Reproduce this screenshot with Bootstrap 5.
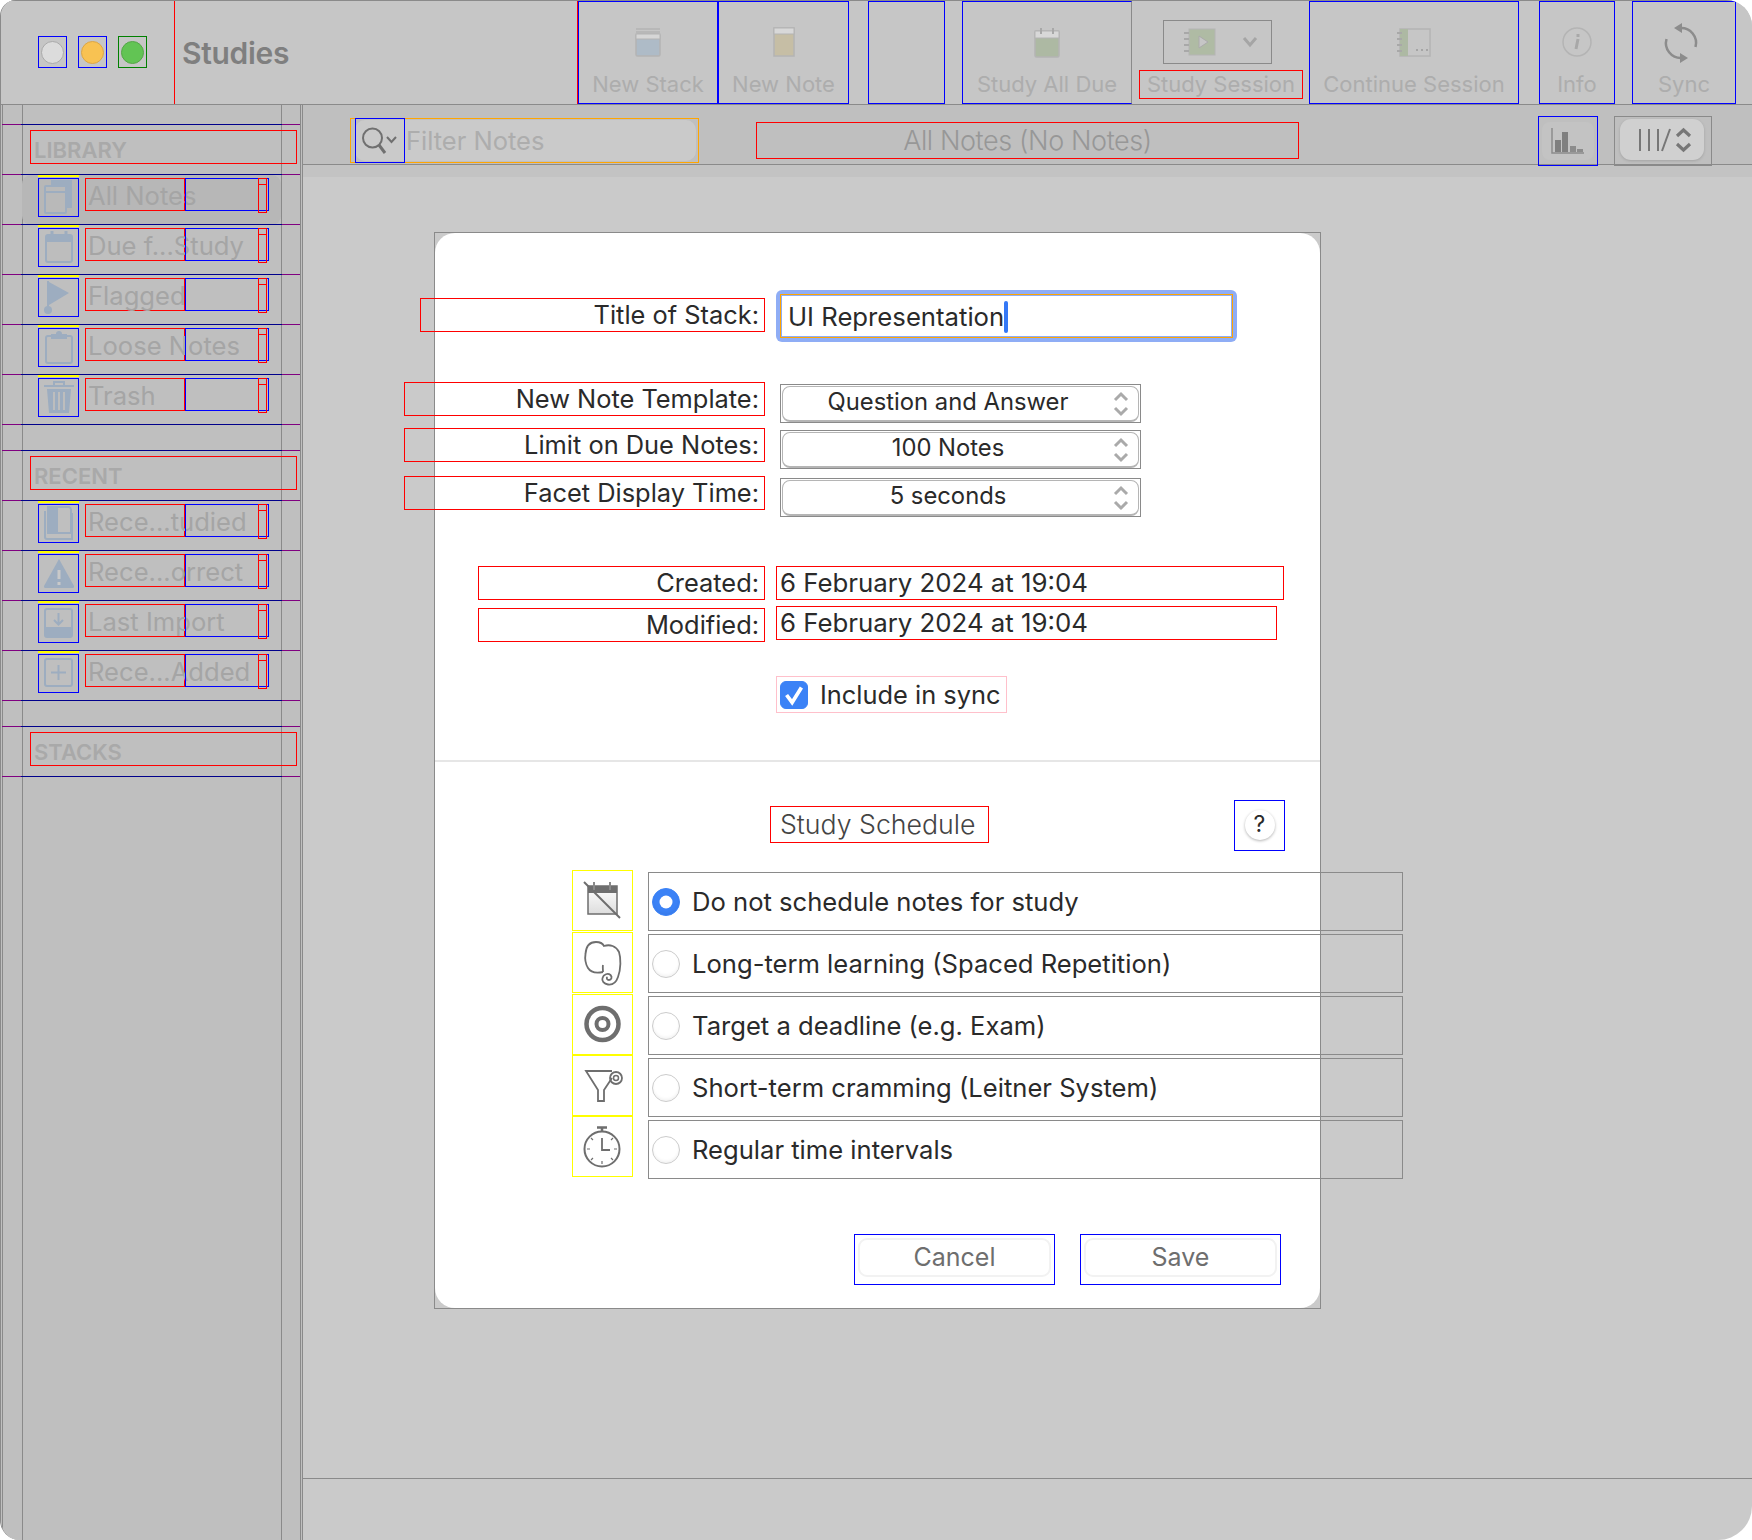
<!DOCTYPE html>
<html lang="en">
<head>
  <meta charset="UTF-8" />
  <title>Studies</title>
  <link href="https://cdn.jsdelivr.net/npm/bootstrap@5.3.3/dist/css/bootstrap.min.css" rel="stylesheet" />
  <style>
    body { background: #fff; margin: 0; font-family: Inter, "Liberation Sans", sans-serif; color: #2a2a2a; overflow: hidden; }
    .app-window { width: 1752px; height: 1540px; background: #cacaca; border-radius: 16px 26px 34px 20px; overflow: hidden; border-left: 1px solid #8a8a8a; }

    /* top toolbar */
    .top-bar { height: 105px; background: #c6c6c6; border-top: 1px solid #8a8a8a; border-bottom: 1px solid #8a8a8a; }
    .light-box { width: 29px; height: 32px; margin-top: 35px; border: 1px solid #00f; }
    .light-dot { width: 23px; height: 23px; border-radius: 50%; border: 1px solid #aaa; }
    .dot-grey { background: #dcdcdc; }
    .dot-amber { background: #f8c252; border-color: #dca645; }
    .dot-green { background: #62c454; border-color: #55a548; }
    .app-title { width: 404px; height: 103px; margin-left: 27px; padding: 1px 0 0 7px; border: 1px solid #f00; border-top: 0; border-bottom: 0; font-size: 30px; font-weight: 600; color: #7f7f7f; letter-spacing: -.3px; }
    .tool-item { height: 103px; border: 1px solid #00f; padding-top: 24px; color: #adadad; font-size: 22px; line-height: 28px; white-space: nowrap; }
    .tool-item svg { display: block; height: 32px; margin-bottom: 12px; }
    .tool-item .sync-icon { height: 42px; margin: -4px 6px 6px 0; }
    .session-drop { width: 109px; height: 44px; margin: 19px 0 6px 31px; border: 1px solid #8a8a8a; }
    .session-play { margin-left: 19px; }
    .session-arrow { margin-left: 25px; }
    .session-label { width: 164px; height: 29px; margin-left: 7px; border: 1px solid #f00; color: #adadad; font-size: 22px; line-height: 27px; }

    /* second bar */
    .sub-bar { height: 60px; background: #bfbfbf; border-bottom: 1px solid #8a8a8a; }
    .filter-wrap { width: 349px; height: 45px; margin: 13px 0 0 47px; border: 1px solid #ffa500; padding: 0 2px 0 4px; }
    .filter-field { height: 41px; margin-top: 1px; background: #cacaca; border-radius: 10px; }
    .filter-btn { width: 50px; height: 45px; border: 1px solid #00f; flex: none; }
    .filter-text { font-size: 25.500px; color: #adadad; margin: 2px 0 0 1px; }
    .list-title { width: 543px; height: 37px; margin: 17px 0 0 57px; border: 1px solid #f00; font-size: 27px; font-weight: 300; letter-spacing: -.4px; color: #979797; line-height: 36px; text-align: center; }
    .chart-btn { width: 60px; height: 50px; margin: 11px 0 0 239px; border: 1px solid #00f; }
    .chart-inner { width: 52px; height: 38px; background: #c3c3c3; border-radius: 8px; }
    .view-box { width: 98px; height: 50px; margin: 11px 0 0 16px; border: 1px solid #8a8a8a; padding: 2px 0 0 5px; }
    .view-pill { width: 84px; height: 41px; padding-left: 5px; background: #d0d0d0; border-radius: 11px; box-shadow: 0 1px 3px rgba(0,0,0,.15); }
    .strip { height: 12px; background: #c3c3c3; }

    /* sidebar */
    .side-pane { width: 302px; height: 1435px; padding: 19px 0 0 1px; background-color: #bfbfbf; flex: none;
      background-image:
        linear-gradient(#8a8a8a, #8a8a8a), linear-gradient(#8a8a8a, #8a8a8a),
        linear-gradient(#8a8a8a, #8a8a8a), linear-gradient(#8a8a8a, #8a8a8a);
      background-size: 1px 100%; background-repeat: no-repeat;
      background-position: 1px 0, 21px 0, 280px 0, 299px 0;
      border-right: 1px solid #8a8a8a; }
    .side-group { margin-bottom: 25px; width: 298px; border-bottom: 1px solid; border-image: linear-gradient(to right, #800080 20px, #00008b 20px, #00008b 279px, #800080 279px) 1; }
    .side-row { height: 50px; position: relative; border-top: 1px solid; border-image: linear-gradient(to right, #800080 20px, #00008b 20px, #00008b 279px, #800080 279px) 1; }
    .side-head { width: 267px; height: 34px; margin: 5px 0 0 28px; padding-left: 3px; border: 1px solid #f00; font-size: 22px; font-weight: 600; color: #a9a9a9; line-height: 39px; overflow: hidden; }
    .side-pick { position: absolute; left: 20px; top: 0; width: 259px; height: 50px; background: #b7b7b7; border-radius: 9px; }
    .side-icon { position: relative; width: 41px; height: 39px; margin: 3px 0 0 36px; border: 1px solid #00f; flex: none; }
    .side-icon::before { content: ""; position: absolute; left: -1px; right: -1px; top: -4px; border-top: 2px solid #ff0; }
    .side-icon svg { display: block; width: 39px; height: 37px; }
    .side-label { position: relative; width: 100px; height: 33px; margin: 3px 0 0 6px; padding-left: 2px; border: 1px solid #f00; font-size: 25.600px; line-height: 33px; color: #a5a5a5; white-space: nowrap; flex: none; }
    .side-count { position: relative; width: 84px; height: 33px; margin-top: 3px; border: 1px solid #00f; flex: none; }
    .side-mark { position: absolute; right: 1px; top: -1px; width: 9px; height: 35px; border: 1px solid #f00; }
    .side-mark::after { content: ""; position: absolute; left: 0; right: 0; top: 5px; border-top: 1px solid #f00; }

    /* stack sheet */
    .main-pane { width: 1449px; position: relative; }
    .main-foot { position: absolute; left: 0; right: 0; top: 1373px; border-top: 1px solid #8a8a8a; }
    .sheet-outer { width: 887px; height: 1077px; margin: 55px 0 0 131px; border: 1px solid #8a8a8a; }
    .sheet-body { height: 100%; background: #fff; border-radius: 20px; padding-top: 57px; font-size: 25.600px; }
    .lbl-box { height: 34px; padding-right: 5px; border: 1px solid #f00; text-align: right; line-height: 32px; flex: none; font-size: 25.400px; }
    .lbl-wide { width: 345px; margin-left: -15px; }
    .lbl-long { width: 361px; margin-left: -31px; }
    .lbl-date { width: 287px; margin-left: 43px; }
    .title-ring { width: 461px; height: 52px; margin-left: 11px; padding: 4px; background: #8fadf5; border-radius: 6px; flex: none; }
    .title-input.form-control { height: 44px; padding: 0 7px; border: 1px solid #ffa500; border-radius: 0; font-size: 25.700px; color: #2a2a2a; line-height: 44px; box-shadow: inset 0 0 0 1px #8fadf5; }
    .text-caret { display: inline-block; width: 4px; height: 32px; background: #3478f6; border-radius: 2px; vertical-align: middle; margin-top: -3px; }
    .select-box { width: 361px; height: 39px; margin: 2px 0 0 15px; border: 1px solid #8a8a8a; padding: 1px; flex: none; }
    .select-box .form-select { height: 36px; padding: 0 25px 4px 0; border: 1px solid #b5b5b5; border-bottom-width: 2px; border-radius: 8px; box-shadow: none; color: #2a2a2a; font-size: 23.800px; line-height: 30px; text-align: center; text-align-last: center; background-size: 16px 26px; background-position: right 9px center;
      background-image: url("data:image/svg+xml,%3Csvg xmlns='http://www.w3.org/2000/svg' viewBox='0 0 16 26'%3E%3Cpath d='M2 9l6-6 6 6M2 17l6 6 6-6' fill='none' stroke='%23aaa' stroke-width='3'/%3E%3C/svg%3E"); }
    .date-box { height: 34px; margin-left: 11px; padding-left: 3px; border: 1px solid #f00; font-size: 25.800px; line-height: 32px; flex: none; }
    .sync-box { width: 231px; height: 37px; margin: 34px 0 0 341px; padding-left: 3px; border: 1px solid #ffc0cb; }
    .sync-box label { margin-top: 2px; font-size: 25.400px; }
    .sync-box .form-check-input { width: 28px; height: 28px; margin: 0 12px 0 0; background-color: #3b82f6; border-color: #3b82f6; border-radius: 6px; flex: none; background-size: 100% 100%;
      background-image: url("data:image/svg+xml,%3Csvg xmlns='http://www.w3.org/2000/svg' viewBox='0 0 28 28'%3E%3Cpath d='M6 14l6 8L22 6' fill='none' stroke='%23fff' stroke-width='4'/%3E%3C/svg%3E"); }
    .sheet-rule { height: 2px; background: #e6e6e6; margin-top: 47px; }
    .schedule-title { width: 219px; height: 37px; margin: 44px 0 0 335px; padding-left: 9px; border: 1px solid #f00; font-weight: 300; color: #444; font-size: 26.700px; line-height: 35px; white-space: nowrap; flex: none; }
    .help-box { width: 51px; height: 51px; margin: 38px 0 0 245px; border: 1px solid #00f; flex: none; }
    .help-btn { width: 30px; height: 30px; margin-top: -2px; border-radius: 50%; background: #fff; box-shadow: 0 1px 3px rgba(0,0,0,.3); font-size: 23px; line-height: 1; }
    .schedule-wrap { margin: 19px 0 0 137px; }
    .ico-col { width: 61px; margin-right: 15px; flex: none; }
    .ico-box { width: 61px; height: 61px; border: 1px solid #ff0; margin-top: 1px; }
    .ico-box:first-child, .ico-box.ico-tight { margin-top: 0; }
    .ico-box svg { width: 44px; height: 44px; overflow: visible; }
    .plan-col { width: 755px; margin-top: 2px; flex: none; }
    .plan-row { height: 59px; margin-bottom: 3px; padding-left: 3px; border: 1px solid #8a8a8a; }
    .plan-row label { margin-top: 2px; }
    .plan-row .form-check-input { width: 28px; height: 28px; margin: 0 12px 0 0; border-color: #ccc; box-shadow: inset 0 -2px 3px rgba(0,0,0,.05); flex: none; }
    .plan-row .form-check-input:checked { background-color: #3b82f6; border-color: #3b82f6; }
    .foot-btns { margin: 52px 39px 0 0; gap: 25px; }
    .foot-box { width: 201px; height: 51px; border: 1px solid #00f; padding: 3px; }
    .foot-box .btn { display: block; width: 100%; height: 39px; padding: 0; border: 2px solid #f2f2f2; border-radius: 9px; background: #fff; color: #6e6e6e; font-size: 25px; line-height: 29px; }
  </style>
</head>
<body>
  <div class="app-window">
    <div class="top-bar d-flex">
      <div class="light-box d-flex align-items-center justify-content-center" style="margin-left:37px"><div class="light-dot dot-grey"></div></div>
      <div class="light-box d-flex align-items-center justify-content-center" style="margin-left:11px"><div class="light-dot dot-amber"></div></div>
      <div class="light-box d-flex align-items-center justify-content-center" style="margin-left:11px;border-color:#008000"><div class="light-dot dot-green"></div></div>
      <div class="app-title d-flex align-items-center">Studies</div>

      <div class="tool-item d-flex flex-column align-items-center" style="width:140px">
        <svg width="28" viewBox="0 0 28 32"><path d="M2 3h24M2 6h24" stroke="#b4b4b4" stroke-width="1.5"/><rect x="2" y="8" width="24" height="22" rx="1.5" fill="#aebbc7" stroke="#b4b4b4" stroke-width="1.5"/><rect x="2" y="8" width="24" height="5" fill="#d6d6d6" stroke="#b4b4b4"/></svg>
        New Stack
      </div>
      <div class="tool-item d-flex flex-column align-items-center" style="width:131px">
        <svg width="24" viewBox="0 0 24 32"><rect x="2" y="2" width="20" height="28" fill="#c6bea5" stroke="#b4b4b4" stroke-width="1.5"/><rect x="2" y="2" width="20" height="6" fill="#d8d8d8" stroke="#b4b4b4"/></svg>
        New Note
      </div>
      <div class="tool-item" style="width:77px;margin-left:19px"></div>
      <div class="tool-item d-flex flex-column align-items-center" style="width:170px;margin-left:17px;border-right-color:#8a8a8a">
        <svg width="28" viewBox="0 0 28 32"><rect x="2" y="5" width="24" height="26" rx="1.5" fill="#adb9a3" stroke="#b4b4b4" stroke-width="1.5"/><rect x="2" y="5" width="24" height="7" fill="#d8d8d8" stroke="#b4b4b4"/><path d="M8 2v6M20 2v6" stroke="#a8a8a8" stroke-width="2"/></svg>
        Study All Due
      </div>
      <div style="width:177px">
        <div class="session-drop d-flex align-items-center">
          <svg class="session-play" width="34" height="28" viewBox="0 0 34 28"><rect x="6" y="1" width="26" height="26" fill="#afbba4" stroke="#b4b4b4"/><path d="M1 5h5M1 11h5M1 17h5M1 23h5" stroke="#a8a8a8" stroke-width="2"/><path d="M16 8l9 6-9 6z" fill="#c6c6c6" stroke="#aaa"/></svg>
          <svg class="session-arrow" width="16" height="12" viewBox="0 0 16 12"><path d="M2 2l6 7 6-7" fill="none" stroke="#a5a5a5" stroke-width="3"/></svg>
        </div>
        <div class="session-label text-center">Study Session</div>
      </div>
      <div class="tool-item d-flex flex-column align-items-center" style="width:210px">
        <svg width="36" viewBox="0 0 36 32"><rect x="4" y="3" width="30" height="27" fill="#c6c6c6" stroke="#b4b4b4" stroke-width="1.5"/><rect x="4" y="3" width="8" height="27" fill="#adb9a3"/><path d="M1 7h5M1 13h5M1 19h5M1 25h5" stroke="#a8a8a8" stroke-width="2"/><path d="M20 24h2M25 24h2M30 24h2" stroke="#a5a5a5" stroke-width="2"/></svg>
        Continue Session
      </div>
      <div class="tool-item d-flex flex-column align-items-center" style="width:76px;margin-left:20px">
        <svg width="32" viewBox="0 0 32 32"><circle cx="16" cy="16" r="14" fill="none" stroke="#b4b4b4" stroke-width="1.5"/><path d="M17 8v3M17 13l-2 10" stroke="#a8a8a8" stroke-width="3"/></svg>
        Info
      </div>
      <div class="tool-item d-flex flex-column align-items-center" style="width:104px;margin-left:17px">
        <svg class="sync-icon" width="36" viewBox="0 0 36 42"><path d="M17 6A15 15 0 0 1 32.500 25M19 36A15 15 0 0 1 3.500 17" fill="none" stroke="#8c8c8c" stroke-width="2.500"/><path d="M11 6l8-5v10zM25 36l-8 5V31z" fill="#8c8c8c"/></svg>
        Sync
      </div>
    </div>

    <div class="d-flex">
      <div class="side-pane">
        <div class="side-group">
          <div class="side-row"><div class="side-head">LIBRARY</div></div>
          <div class="side-row d-flex"><div class="side-pick"></div>
            <div class="side-icon"><svg viewBox="0 0 39 37"><rect x="12" y="1" width="21" height="28" fill="#9dadc0"/><rect x="6" y="7" width="21" height="27" rx="1" fill="#b9b9b9" stroke="#9dadc0" stroke-width="2"/><path d="M6 13h21" stroke="#9dadc0" stroke-width="2"/></svg></div>
            <div class="side-label">All Notes</div><div class="side-count"><div class="side-mark"></div></div></div>
          <div class="side-row d-flex">
            <div class="side-icon"><svg viewBox="0 0 39 37"><rect x="7" y="6" width="26" height="27" rx="2" fill="#bdbdbd" stroke="#9dadc0" stroke-width="2"/><path d="M7 6h26v7H7z" fill="#9dadc0"/><path d="M13 2v6M27 2v6" stroke="#9dadc0" stroke-width="3"/></svg></div>
            <div class="side-label">Due f...Study</div><div class="side-count"><div class="side-mark"></div></div></div>
          <div class="side-row d-flex">
            <div class="side-icon"><svg viewBox="0 0 39 37"><path d="M9 2v28" stroke="#9dadc0" stroke-width="2"/><path d="M10 3l20 11-20 12z" fill="#9dadc0"/><circle cx="9" cy="31" r="4" fill="#9dadc0"/></svg></div>
            <div class="side-label">Flagged</div><div class="side-count"><div class="side-mark"></div></div></div>
          <div class="side-row d-flex">
            <div class="side-icon"><svg viewBox="0 0 39 37"><rect x="7" y="7" width="26" height="27" rx="2" fill="#bdbdbd" stroke="#9dadc0" stroke-width="2"/><path d="M12 5h5a3 3 0 0 1 6 0h5v5H12z" fill="#9dadc0"/></svg></div>
            <div class="side-label">Loose Notes</div><div class="side-count"><div class="side-mark"></div></div></div>
          <div class="side-row d-flex">
            <div class="side-icon"><svg viewBox="0 0 39 37"><path d="M5 7h30M15 7V3h10v4" fill="none" stroke="#9dadc0" stroke-width="2"/><path d="M8 10h24l-2 24H10z" fill="#9dadc0"/><path d="M15 13v18M20 13v18M25 13v18" stroke="#bdbdbd" stroke-width="2"/></svg></div>
            <div class="side-label">Trash</div><div class="side-count"><div class="side-mark"></div></div></div>
        </div>
        <div class="side-group">
          <div class="side-row"><div class="side-head">RECENT</div></div>
          <div class="side-row d-flex">
            <div class="side-icon"><svg viewBox="0 0 39 37"><path d="M9 2h10v26H9z" fill="#9dadc0"/><path d="M9 2h21a3 3 0 0 1 2 3v23H9z" fill="none" stroke="#9dadc0" stroke-width="2"/><path d="M6 6v26a2 2 0 0 0 2 2h25V8" fill="none" stroke="#9dadc0" stroke-width="2"/></svg></div>
            <div class="side-label">Rece...tudied</div><div class="side-count"><div class="side-mark"></div></div></div>
          <div class="side-row d-flex">
            <div class="side-icon"><svg viewBox="0 0 39 37"><path d="M20 4L5 31a1.500 1.500 0 0 0 1 2h28a1.500 1.500 0 0 0 1-2z" fill="#9dadc0"/><path d="M20 15v9M20 27v3" stroke="#c9c9c9" stroke-width="3"/></svg></div>
            <div class="side-label">Rece...orrect</div><div class="side-count"><div class="side-mark"></div></div></div>
          <div class="side-row d-flex">
            <div class="side-icon"><svg viewBox="0 0 39 37"><rect x="6" y="4" width="27" height="28" rx="2" fill="none" stroke="#9dadc0" stroke-width="2"/><rect x="6" y="22" width="27" height="10" fill="#9dadc0"/><path d="M19.500 8v11M15 15l4.500 4.500 4.500-4.500" fill="none" stroke="#9dadc0" stroke-width="2"/></svg></div>
            <div class="side-label">Last Import</div><div class="side-count"><div class="side-mark"></div></div></div>
          <div class="side-row d-flex">
            <div class="side-icon"><svg viewBox="0 0 39 37"><rect x="6" y="4" width="27" height="27" rx="2" fill="none" stroke="#9dadc0" stroke-width="2"/><path d="M19.500 10v15M12 17.500h15" stroke="#9dadc0" stroke-width="2"/></svg></div>
            <div class="side-label">Rece...Added</div><div class="side-count"><div class="side-mark"></div></div></div>
        </div>
        <div class="side-group">
          <div class="side-row"><div class="side-head">STACKS</div></div>
        </div>
      </div>

      <div class="main-pane">
        <div class="sub-bar d-flex align-items-start">
          <div class="filter-wrap">
            <div class="filter-field d-flex align-items-center">
              <div class="filter-btn d-flex align-items-center justify-content-center">
                <svg width="36" height="30" viewBox="0 0 36 30"><circle cx="10.500" cy="12" r="9.500" fill="none" stroke="#707070" stroke-width="2"/><path d="M17 19l6 8" stroke="#707070" stroke-width="3"/><path d="M25 11l4.500 5 4.500-5" fill="none" stroke="#707070" stroke-width="2"/></svg>
              </div>
              <span class="filter-text">Filter Notes</span>
            </div>
          </div>
          <div class="list-title">All Notes (No Notes)</div>
          <div class="chart-btn d-flex align-items-center justify-content-center">
            <div class="chart-inner d-flex align-items-center justify-content-center">
              <svg width="34" height="28" viewBox="0 0 34 28"><path d="M1 1v25h32" fill="none" stroke="#8c8c8c" stroke-width="1.500"/><rect x="4" y="13" width="6" height="12" fill="#7f7f7f"/><rect x="11" y="5" width="6" height="20" fill="#7f7f7f"/><rect x="19" y="19" width="6" height="6" fill="#8c8c8c"/><rect x="26" y="22" width="6" height="3" fill="#8c8c8c"/></svg>
            </div>
          </div>
          <div class="view-box">
            <div class="view-pill d-flex align-items-center justify-content-center">
              <svg width="56" height="30" viewBox="0 0 56 30"><path d="M3 4v22M12 4v22M21 4v22" stroke="#777" stroke-width="2"/><path d="M25 26l8-22" stroke="#777" stroke-width="2"/><path d="M40 11l6.500-6 6.500 6M40 19l6.500 6 6.500-6" fill="none" stroke="#777" stroke-width="3.200"/></svg>
            </div>
          </div>
        </div>
        <div class="strip"></div>
        <div class="main-foot"></div>

        <div class="sheet-outer">
          <div class="sheet-body">
            <div class="d-flex">
              <div class="lbl-box lbl-wide" style="margin-top:8px">Title of Stack:</div>
              <div class="title-ring"><div class="title-input form-control">UI Representation<span class="text-caret"></span></div></div>
            </div>
            <div class="d-flex" style="margin-top:40px">
              <div class="lbl-box lbl-long">New Note Template:</div>
              <div class="select-box"><select class="form-select"><option>Question and Answer</option></select></div>
            </div>
            <div class="d-flex" style="margin-top:5px">
              <div class="lbl-box lbl-long">Limit on Due Notes:</div>
              <div class="select-box"><select class="form-select"><option>100 Notes</option></select></div>
            </div>
            <div class="d-flex" style="margin-top:7px">
              <div class="lbl-box lbl-long">Facet Display Time:</div>
              <div class="select-box"><select class="form-select"><option>5 seconds</option></select></div>
            </div>
            <div class="d-flex" style="margin-top:49px">
              <div class="lbl-box lbl-date">Created:</div>
              <div class="date-box" style="width:508px">6 February 2024 at 19:04</div>
            </div>
            <div class="d-flex" style="margin-top:6px">
              <div class="lbl-box lbl-date" style="margin-top:2px">Modified:</div>
              <div class="date-box" style="width:501px">6 February 2024 at 19:04</div>
            </div>
            <div class="sync-box form-check d-flex align-items-center">
              <input class="form-check-input" type="checkbox" id="syncCheck" checked />
              <label for="syncCheck">Include in sync</label>
            </div>
            <div class="sheet-rule"></div>
            <div class="d-flex align-items-start" style="height:89px">
              <div class="schedule-title">Study Schedule</div>
              <div class="help-box d-flex align-items-center justify-content-center"><div class="help-btn d-flex align-items-center justify-content-center">?</div></div>
            </div>
            <div class="schedule-wrap d-flex">
              <div class="ico-col">
                <div class="ico-box d-flex align-items-center justify-content-center">
                  <svg viewBox="0 0 44 44"><defs><linearGradient id="calFade" x1="0" y1="0" x2="0" y2="1"><stop offset="0" stop-color="#fff"/><stop offset="1" stop-color="#ddd"/></linearGradient></defs><rect x="7" y="7" width="29" height="28" fill="url(#calFade)" stroke="#6e6e6e" stroke-width="1.500"/><rect x="7" y="7" width="29" height="7" fill="#6e6e6e"/><path d="M13 3v8M29 3v8" stroke="#8a8a8a" stroke-width="2"/><path d="M3 3l36 36" stroke="#6e6e6e" stroke-width="2"/></svg>
                </div>
                <div class="ico-box d-flex align-items-center justify-content-center">
                  <svg viewBox="0 0 44 44"><path d="M22 31C17 32 10 32 7 27 4 22 4 16 4.500 13 5 5 9 1 15 1 19 1 22 3 23 5 29 3 35 5 38 11 40 17 40 28 37 36 35 42 31 44 27 43.500 23 43 20.500 40 21.500 37 22.500 33 27 32 29.500 34 31.500 36 30.500 39 28 39 26 39 25 37 26.500 36M22 31C22 28 21.500 26 22 24" fill="none" stroke="#6e6e6e" stroke-width="1.800"/></svg>
                </div>
                <div class="ico-box d-flex align-items-center justify-content-center">
                  <svg viewBox="0 0 44 44"><circle cx="21.500" cy="21" r="16" fill="none" stroke="#6e6e6e" stroke-width="4.500"/><circle cx="21.500" cy="21" r="6" fill="none" stroke="#6e6e6e" stroke-width="4"/></svg>
                </div>
                <div class="ico-box ico-tight d-flex align-items-center justify-content-center">
                  <svg viewBox="0 0 44 44"><path d="M31 7H5l12 19v11h6V26l8-12" fill="none" stroke="#6e6e6e" stroke-width="1.800"/><circle cx="35" cy="14" r="6" fill="none" stroke="#6e6e6e" stroke-width="1.800"/><circle cx="35" cy="14" r="2.500" fill="none" stroke="#6e6e6e" stroke-width="1.500"/></svg>
                </div>
                <div class="ico-box ico-tight d-flex align-items-center justify-content-center">
                  <svg viewBox="0 0 44 44"><circle cx="21" cy="24" r="17.500" fill="none" stroke="#6e6e6e" stroke-width="2"/><path d="M21 3v4M16 2.500h10" stroke="#6e6e6e" stroke-width="2.500"/><path d="M21 13v12h8" fill="none" stroke="#6e6e6e" stroke-width="1.800"/><path d="M21 36v3M6 24h3M33 24h3M10 13l2 2M32 13l-2 2M10 35l2-2M32 35l-2-2" stroke="#6e6e6e" stroke-width="1.200"/></svg>
                </div>
              </div>
              <div class="plan-col">
                <div class="plan-row form-check d-flex align-items-center"><input class="form-check-input" type="radio" name="plan" id="planNone" checked /><label for="planNone">Do not schedule notes for study</label></div>
                <div class="plan-row form-check d-flex align-items-center"><input class="form-check-input" type="radio" name="plan" id="planLong" /><label for="planLong">Long-term learning (Spaced Repetition)</label></div>
                <div class="plan-row form-check d-flex align-items-center"><input class="form-check-input" type="radio" name="plan" id="planTarget" /><label for="planTarget">Target a deadline (e.g. Exam)</label></div>
                <div class="plan-row form-check d-flex align-items-center"><input class="form-check-input" type="radio" name="plan" id="planShort" /><label for="planShort">Short-term cramming (Leitner System)</label></div>
                <div class="plan-row form-check d-flex align-items-center"><input class="form-check-input" type="radio" name="plan" id="planTime" /><label for="planTime">Regular time intervals</label></div>
              </div>
            </div>
            <div class="foot-btns d-flex justify-content-end">
              <div class="foot-box"><button type="button" class="btn">Cancel</button></div>
              <div class="foot-box"><button type="button" class="btn">Save</button></div>
            </div>
          </div>
        </div>
      </div>
    </div>
  </div>
  <script src="https://cdn.jsdelivr.net/npm/bootstrap@5.3.3/dist/js/bootstrap.bundle.min.js"></script>
</body>
</html>
